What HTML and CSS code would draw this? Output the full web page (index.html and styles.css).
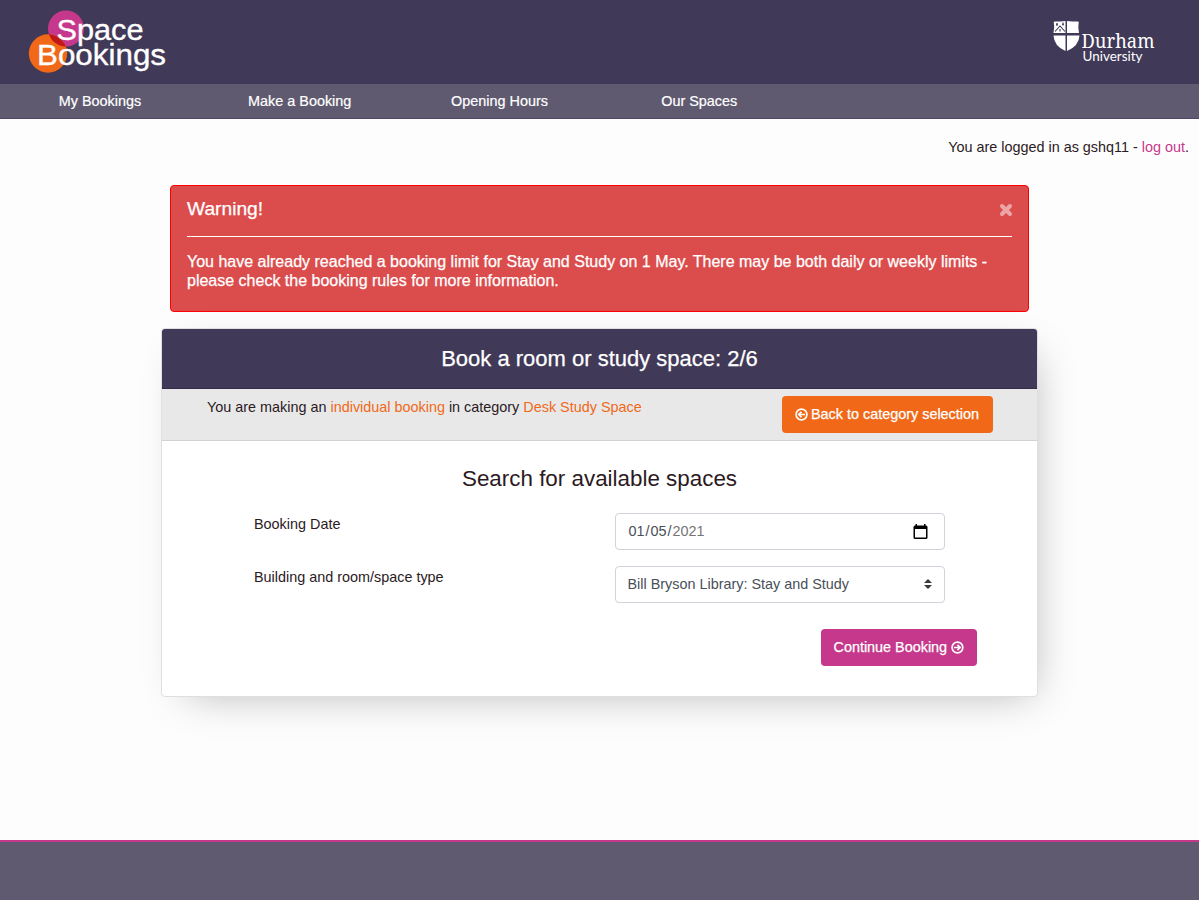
FILE: index.html
```html
<!DOCTYPE html>
<html lang="en">
<head>
<meta charset="utf-8">
<title>Space Bookings</title>
<link rel="stylesheet" href="styles.css">
</head>
<body>
<header class="masthead">
  <svg class="brand" width="144" height="68" viewBox="0 0 144 68" role="img" aria-label="Space Bookings">
    <defs><clipPath id="pinkClip"><circle cx="38" cy="20.500" r="18"/></clipPath></defs>
    <circle cx="38" cy="20.500" r="18" fill="#c5388b"/>
    <circle cx="20" cy="45.500" r="19.200" fill="#f06818"/>
    <circle cx="20" cy="45.500" r="19.200" fill="#c01818" clip-path="url(#pinkClip)"/>
    <text class="brand-text" x="28.500" y="31.500" textLength="87" lengthAdjust="spacingAndGlyphs">Space</text>
    <text class="brand-text" x="9" y="56.800" textLength="129" lengthAdjust="spacingAndGlyphs">Bookings</text>
  </svg>
  <svg class="durham" width="106" height="48" viewBox="0 0 106 48" role="img" aria-label="Durham University">
    <path fill="#fff" d="M1 3.500Q0 1.500 2 1.500Q8 1.500 12.500 1V13H.500Q1.500 8 1 3.500zM14 1Q19 1.500 24.500 1.500Q26.500 1.500 25.500 3.500Q25 8 26 13H14zM.500 15.500H12.500V31Q1 26 .500 15.500zM14 15.500H26.500Q26 26 14 31z"/>
    <path fill="none" stroke="#413958" stroke-width="1.100" d="M2 11.500L7 6l5 5.500M4 3v3M10 2.500v3M3 4.200h2M9 4.200h2M7 9v2.500"/>
    <text class="durham-name" x="28.500" y="28" textLength="73" lengthAdjust="spacingAndGlyphs">Durham</text>
    <text class="durham-sub" x="29.500" y="40.500" textLength="60" lengthAdjust="spacingAndGlyphs">University</text>
  </svg>
</header>
<nav class="nav">
  <a>My Bookings</a><a>Make a Booking</a><a>Opening Hours</a><a>Our Spaces</a>
</nav>
<main class="main">
  <p class="login">You are logged in as gshq11 - <a class="pink">log out</a>.</p>
  <section class="alert">
    <div class="alert-head">
      <h2>Warning!</h2>
      <svg width="14" height="14" viewBox="0 0 14 14"><path d="M3 3l8 8M11 3l-8 8" stroke="#eda6a6" stroke-width="4" stroke-linecap="round"/></svg>
    </div>
    <p class="alert-text">You have already reached a booking limit for Stay and Study on 1 May. There may be both daily or weekly limits -<br>please check the booking rules for more information.</p>
  </section>
  <section class="card">
    <h1 class="card-title"><span>Book a room or study space: 2/6</span></h1>
    <div class="summary">
      <p>You are making an <span class="orange">individual booking</span> in category <span class="orange">Desk Study Space</span></p>
      <button class="btn btn-back"><svg width="13" height="13" viewBox="0 0 13 13"><circle cx="6.500" cy="6.500" r="5.400"/><path d="M10 6.500H4M6.500 3.800L3.800 6.500l2.700 2.700"/></svg><span>Back to category selection</span></button>
    </div>
    <form class="form">
      <h2 class="form-title">Search for available spaces</h2>
      <div class="row">
        <label>Booking Date</label>
        <div class="field date"><span class="date-value"><span>01</span>/<span>05</span>/<span class="year">2021</span></span>
          <svg width="15" height="16" viewBox="0 0 15 16"><path fill="#000" fill-rule="evenodd" d="M2.500 0h1.500v1.500h7V0h1.500v1.500H13q1.500 0 1.500 1.500v10.500q0 1.500-1.500 1.500H2Q.5 15 .5 13.500V3Q.5 1.500 2 1.500h.5zM2 5v8.500h11V5z"/></svg>
        </div>
      </div>
      <div class="row">
        <label>Building and room/space type</label>
        <div class="field select"><span>Bill Bryson Library: Stay and Study</span>
          <svg width="8" height="10" viewBox="0 0 8 10"><path fill="#343a40" d="M4 0l4 4H0zM0 6h8L4 10z"/></svg>
        </div>
      </div>
      <div class="actions"><button type="button" class="btn btn-next"><span>Continue Booking</span><svg width="13" height="13" viewBox="0 0 13 13"><circle cx="6.500" cy="6.500" r="5.400"/><path d="M3 6.500H9M6.500 3.800L9.200 6.500l-2.700 2.700"/></svg></button></div>
    </form>
  </section>
</main>
<footer class="footer"></footer>
</body>
</html>
```

FILE: styles.css
```css
* { box-sizing: border-box; }
body {
  margin: 0;
  height: 900px;
  display: flex;
  flex-direction: column;
  overflow: hidden;
  background: #fdfdfd;
  color: #2b1a1e;
  font: 14.4px/22px "Liberation Sans", Arial, sans-serif;
}
h1, h2, p { margin: 0; font-weight: 400; }
.masthead {
  height: 84px;
  padding: 8px 40px 0 28px;
  display: flex;
  justify-content: space-between;
  background: #413958;
}
.durham { margin-top: 12px; overflow: visible; }
.brand-text { fill: #fff; stroke: #fff; stroke-width: .35; font-size: 29.5px; }
.durham-name { fill: #fff; font: 20px "Noto Serif", "DejaVu Serif", serif; }
.durham-sub { fill: #fff; font: 12.5px Lato, sans-serif; }
.nav { height: 35px; display: flex; background: #5f5a70; border-bottom: 1px solid #504963; color: #fff; -webkit-text-stroke: .2px; }
.nav a { width: 199.8px; padding-top: 6px; text-align: center; }
.main { flex: 1; }
.login { padding: 17px 10px 0 0; text-align: right; }
.pink { color: #c5388b; }
.orange { color: #f06818; }
.alert {
  width: 859px;
  height: 127px;
  margin: 27px auto 0 170px;
  padding: 11px 16px;
  background: #db4d4d;
  border: 1px solid #f00;
  border-radius: 4px;
  color: #fff;
  -webkit-text-stroke: .25px;
}
.alert-head { display: flex; justify-content: space-between; align-items: flex-start; height: 40px; border-bottom: 1px solid #fff; }
.alert-head h2 { font-size: 19.2px; line-height: 24px; }
.alert-head svg { margin: 6px -1px 0 0; }
.alert-text { margin-top: 15px; font-size: 16px; line-height: 19px; white-space: nowrap; }
.card {
  width: 877px;
  height: 369px;
  margin: 16px 0 0 161px;
  background: #fff;
  border: 1px solid #dfdfdf;
  border-radius: 4px;
  box-shadow: 10px 12px 40px -16px rgba(0, 0, 0, .3);
}
.card-title {
  height: 60px;
  background: #413958;
  border-bottom: 1px solid #342d49;
  border-radius: 3px 3px 0 0;
  color: #fff;
  font-size: 22px;
  line-height: 59px;
  text-align: center;
  -webkit-text-stroke: .25px;
}
.summary {
  height: 52px;
  padding: 7px 44px 0 45px;
  display: flex;
  justify-content: space-between;
  align-items: flex-start;
  background: #e8e8e8;
  border-bottom: 1px solid #d2d2d2;
}
.btn {
  height: 37px;
  padding: 0 13px;
  display: flex;
  align-items: center;
  gap: 3px;
  border: 0;
  border-radius: 4px;
  color: #fff;
  font: inherit;
  white-space: nowrap;
  -webkit-text-stroke: .25px;
}
.btn span, .field > span { padding-bottom: 2px; }
.btn svg { fill: none; stroke: #fff; stroke-width: 1.7; margin-bottom: 1px; }
.btn-back { width: 211px; background: #f06818; }
.btn-next { width: 156px; padding-left: 12.5px; gap: 4px; background: #c5388b; }
.form { padding: 25px 92px 0; }
.form-title { margin-bottom: 21px; font-size: 22.4px; line-height: 26px; text-align: center; }
.row { display: flex; justify-content: space-between; height: 37px; margin-bottom: 16px; }
.field {
  width: 330px;
  padding: 0 16px 0 11.5px;
  display: flex;
  align-items: center;
  justify-content: space-between;
  border: 1px solid #ced4da;
  border-radius: 4px;
  color: #495057;
}
.select { padding-right: 12px; }
.select svg { margin-bottom: 1px; }
.date-value span { padding: 0 1px; }
.date .year { color: #757575; }
.actions { display: flex; justify-content: flex-end; margin: 26px -32px 0 0; }
.footer { height: 60px; background: #5f5a70; border-top: 2px solid #c5388b; }
```
